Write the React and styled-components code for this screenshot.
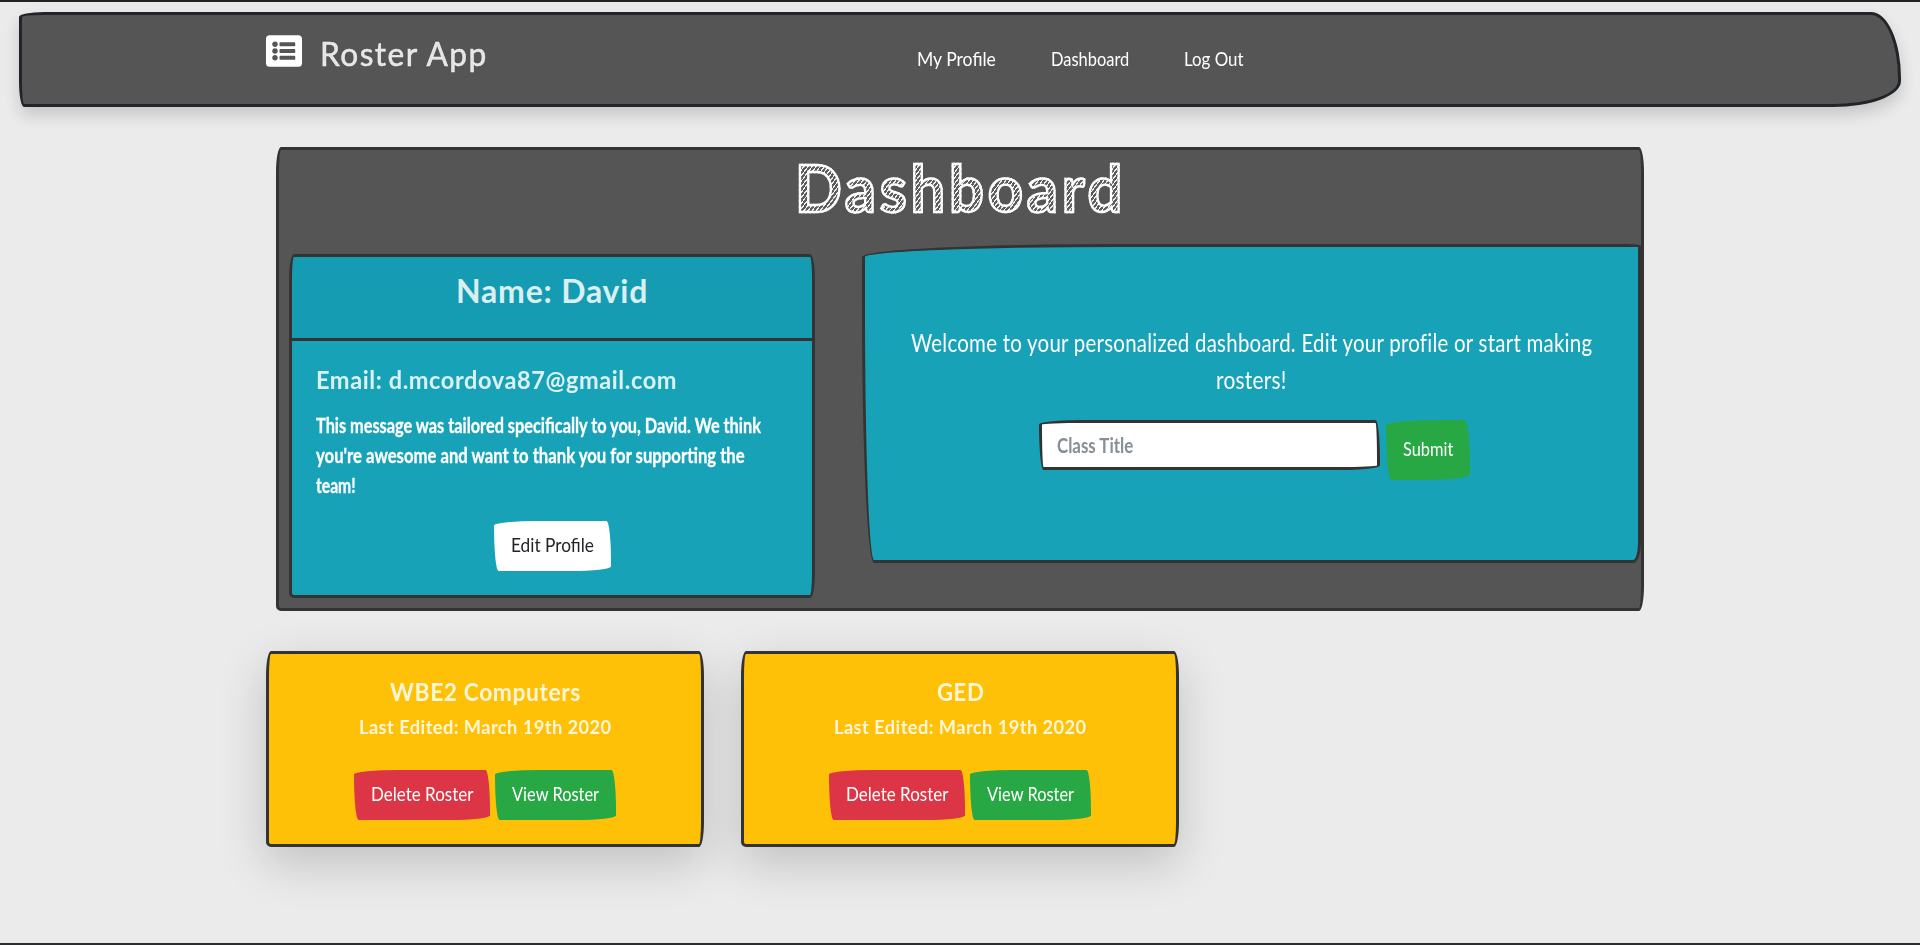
import React, { useLayoutEffect, useRef, useState } from "react";
import styled, { createGlobalStyle } from "styled-components";
import { FaListAlt } from "react-icons/fa";

const GlobalStyle = createGlobalStyle`
  *, *::before, *::after { box-sizing: border-box; }
  body {
    margin: 0;
    background: #ebebeb;
    color: #fff;
    font-family: Lato, "Open Sans", sans-serif;
    font-size: 20px;
    line-height: 30px;
  }
  h1, h2, h3, h4, p { margin: 0; font-weight: inherit; }
  button { font: inherit; cursor: pointer; }
`;

const FitBox = styled.span`
  display: inline-block;
  width: ${(p) => p.$width}px;
  white-space: nowrap;
  text-align: left;
  vertical-align: top;
`;

const FitInner = styled.span`
  display: inline-block;
  transform-origin: 0 50%;
  vertical-align: top;
`;

/* One line of lettering, condensed or widened to the given width. */
function Fit({ width, children }) {
  const ref = useRef(null);
  const [scale, setScale] = useState(1);
  useLayoutEffect(() => {
    setScale(width / ref.current.offsetWidth);
  }, [width, children]);
  return (
    <FitBox $width={width}>
      <FitInner ref={ref} style={{ transform: `scaleX(${scale})` }}>
        {children}
      </FitInner>
    </FitBox>
  );
}

const Page = styled.div`
  height: 945px;
  overflow: hidden;
  padding-top: 10px;
  border-top: 2px solid #222;
  border-bottom: 2px solid #2b2d2f;
`;

const Header = styled.header`
  display: flex;
  align-items: flex-start;
  height: 95px;
  margin: 0 1%;
  padding-left: 243.5px;
  background: #555;
  border: 3px solid #212529;
  border-radius: 25px 30px 68px 5px / 5px 66px 26px 25px;
  box-shadow: 0 8px 16px rgba(0, 0, 0, 0.16);
`;

const Brand = styled.div`
  display: flex;
  width: 651px;
  gap: 18px;
  padding-top: 17px;
  font-size: 33px;
  line-height: 42px;
  letter-spacing: 1.5px;
  color: rgba(255, 255, 255, 0.85);
  -webkit-text-stroke: 0.5px rgba(255, 255, 255, 0.8);

  svg { width: 36px; height: 36px; margin-top: 1px; color: #fff; }
`;

const Nav = styled.nav`
  display: flex;
  gap: 55px;
  padding-top: 28px;
`;

const NavLink = styled.a`
  color: #fff;
`;

const Panel = styled.main`
  width: 1368px;
  height: 464px;
  margin: 40px 0 0 276px;
  background: #555;
  border: 3px solid #333;
  border-radius: 5px / 25px 25px 25px 5px;
`;

const PanelTitle = styled.h1`
  font-size: 65px;
  font-weight: 700;
  line-height: 75px;
  height: 74px;
  letter-spacing: 4px;
  text-align: center;

  ${FitInner} {
    color: transparent;
    background: repeating-linear-gradient(128deg, #eee 0 1.2px, #5c5c5c 1.2px 3.4px);
    background-clip: text;
    -webkit-background-clip: text;
    -webkit-text-stroke: 2.4px #fff;
  }
`;

const Columns = styled.div`
  display: flex;
  align-items: flex-start;
  gap: 47px;
  padding-left: 10px;
`;

const ProfileCard = styled.section`
  width: 526px;
  height: 344px;
  margin-top: 30px;
  overflow: hidden;
  background: #17a2b8;
  border: 3px solid #333;
  border-radius: 5px / 25px 25px 25px 5px;
`;

const ProfileHeader = styled.div`
  height: 84px;
  padding-top: 14px;
  background: rgba(0, 0, 0, 0.03);
  border-bottom: 3px solid #333;
  text-align: center;
`;

const ProfileBody = styled.div`
  display: flex;
  flex-direction: column;
  padding: 24px 24px 0;
`;

const Heading = styled.h2`
  font-size: ${(p) => p.$size}px;
  font-weight: 700;
  line-height: ${(p) => (p.$size > 30 ? 40 : 30)}px;
  letter-spacing: ${(p) => p.$size / 40}px;
  color: rgba(255, 255, 255, ${(p) => p.$alpha || 0.85});
`;

const Message = styled.p`
  display: flex;
  flex-direction: column;
  margin: 15px 0 21px;
  font-weight: 700;
  -webkit-text-stroke: 0.3px #fff;
`;

const buttonColors = {
  light: ["#fff", "#212529"],
  success: ["#28a745", "#fff"],
  danger: ["#dc3545", "#fff"],
};

const Button = styled.button`
  width: ${(p) => p.$width}px;
  height: ${(p) => (p.$tall ? 60 : 50)}px;
  padding: 0 0 ${(p) => (p.$tall ? 4 : 3)}px;
  align-self: center;
  border: 0;
  border-radius: 255px 25px 225px 25px / 25px 225px 25px 255px;
  background: ${(p) => buttonColors[p.$kind][0]};
  color: ${(p) => buttonColors[p.$kind][1]};
  line-height: ${(p) => (p.$tall ? 56 : 47)}px;
`;

const Welcome = styled.section`
  width: 779px;
  height: 319px;
  margin-top: 20px;
  padding-top: 77px;
  background: #17a2b8;
  border: 3px solid #333;
  border-radius: 255px 15px 8px 12px / 13px 2px 20px 255px;
`;

const Lead = styled.p`
  display: flex;
  flex-direction: column;
  align-items: center;
  font-size: 25px;
  line-height: 37px;
  letter-spacing: 0.3px;
`;

const Form = styled.div`
  display: flex;
  gap: 6px;
  margin: 22px 0 0 174px;
`;

const Field = styled.div`
  width: 341px;
  height: 50px;
  padding-left: 15px;
  background: #fff;
  border: 3px solid #333;
  border-radius: 255px 25px 225px 25px / 25px 225px 25px 255px;
  color: #868e96;
  font-weight: 700;
  line-height: 45px;
`;

const Rosters = styled.section`
  display: flex;
  gap: 37px;
  margin: 40px 0 0 266px;
`;

const RosterCard = styled.article`
  width: 438px;
  height: 196px;
  padding-top: 23px;
  background: #ffc107;
  border: 3px solid #333;
  border-radius: 5px / 25px 25px 25px 5px;
  box-shadow: 0 16px 48px rgba(0, 0, 0, 0.185);
  text-align: center;
`;

const Edited = styled(Heading)`
  margin-top: 5px;
`;

const Actions = styled.div`
  display: flex;
  justify-content: center;
  gap: 5px;
  margin-top: 28px;
`;

const rosters = [
  { title: "WBE2 Computers", width: 191 },
  { title: "GED", width: 47 },
];

export default function App() {
  return (
    <>
      <GlobalStyle />
      <Page>
        <Header>
          <Brand>
            <FaListAlt />
            <Fit width={168}>Roster App</Fit>
          </Brand>
          <Nav>
            <NavLink><Fit width={79}>My Profile</Fit></NavLink>
            <NavLink><Fit width={78}>Dashboard</Fit></NavLink>
            <NavLink><Fit width={60}>Log Out</Fit></NavLink>
          </Nav>
        </Header>

        <Panel>
          <PanelTitle><Fit width={331}>Dashboard</Fit></PanelTitle>
          <Columns>
            <ProfileCard>
              <ProfileHeader>
                <Heading $size={32}><Fit width={192}>Name: David</Fit></Heading>
              </ProfileHeader>
              <ProfileBody>
                <Heading $size={24}><Fit width={361}>Email: d.mcordova87@gmail.com</Fit></Heading>
                <Message>
                  <Fit width={445}>This message was tailored specifically to you, David. We think</Fit>
                  <Fit width={429}>you're awesome and want to thank you for supporting the</Fit>
                  <Fit width={40}>team!</Fit>
                </Message>
                <Button $kind="light" $width={117}><Fit width={83}>Edit Profile</Fit></Button>
              </ProfileBody>
            </ProfileCard>

            <Welcome>
              <Lead>
                <Fit width={681}>Welcome to your personalized dashboard. Edit your profile or start making</Fit>
                <Fit width={71}>rosters!</Fit>
              </Lead>
              <Form>
                <Field><Fit width={76}>Class Title</Fit></Field>
                <Button $kind="success" $width={84} $tall><Fit width={50}>Submit</Fit></Button>
              </Form>
            </Welcome>
          </Columns>
        </Panel>

        <Rosters>
          {rosters.map((r) => (
            <RosterCard key={r.title}>
              <Heading $size={24}><Fit width={r.width}>{r.title}</Fit></Heading>
              <Edited as="h3" $size={19.5}><Fit width={253}>Last Edited: March 19th 2020</Fit></Edited>
              <Actions>
                <Button $kind="danger" $width={136}><Fit width={102}>Delete Roster</Fit></Button>
                <Button $kind="success" $width={121}><Fit width={87}>View Roster</Fit></Button>
              </Actions>
            </RosterCard>
          ))}
        </Rosters>
      </Page>
    </>
  );
}
